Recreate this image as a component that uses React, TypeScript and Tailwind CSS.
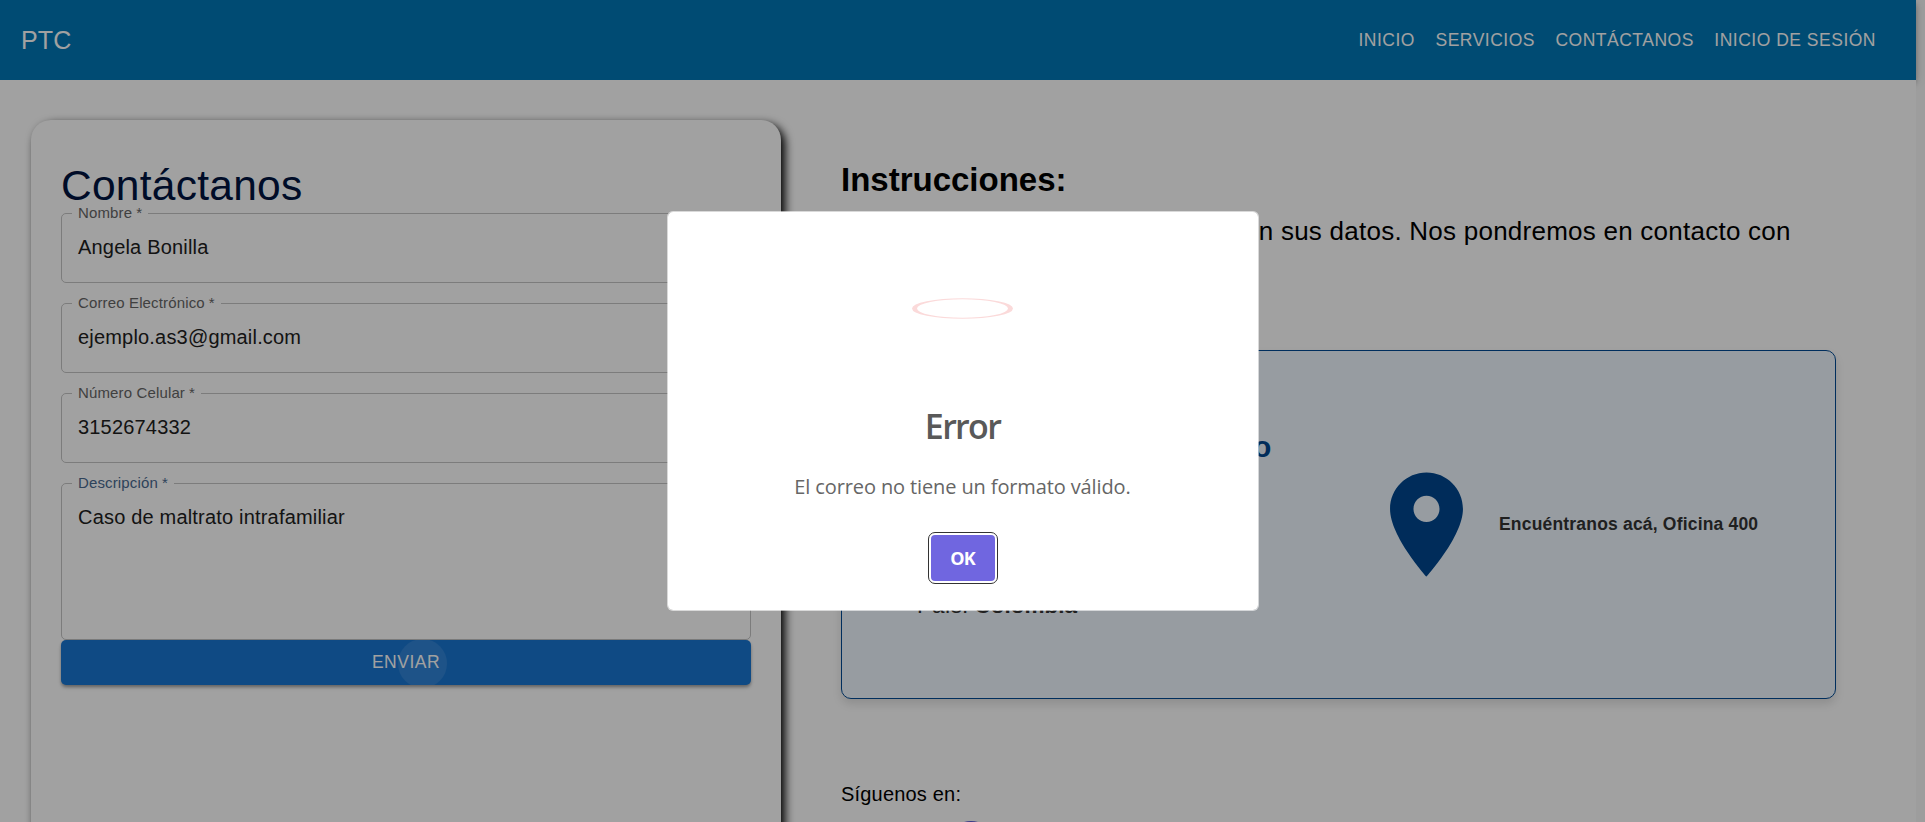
import type { ReactNode } from "react";

const NAV = ["INICIO", "SERVICIOS", "CONTÁCTANOS", "INICIO DE SESIÓN"];

function Field({
  label,
  labelClass = "text-[#666666]",
  heightClass = "h-[76px]",
  children,
}: {
  label: string;
  labelClass?: string;
  heightClass?: string;
  children: ReactNode;
}) {
  return (
    <fieldset
      className={`-mt-[6px] min-w-0 rounded-[5px] border border-[#c4c4c4] px-[10px] ${heightClass}`}
    >
      <legend
        className={`h-[13px] px-[6px] text-[15px] leading-[11px] tracking-[0.00938em] ${labelClass}`}
      >
        {label}
        <span className="pl-[4px]">*</span>
      </legend>
      <div className="px-[6px] pt-[13px] text-[20px] leading-[29px] tracking-[0.00938em] text-[#212121]">
        {children}
      </div>
    </fieldset>
  );
}

function ContactForm() {
  return (
    <section className="ml-[31px] mt-[40px] h-[800px] w-[750px] shrink-0 rounded-[20px] bg-white px-[30px] pt-[40px] shadow-[4px_4px_10px_rgba(0,0,0,1)]">
      <h1 className="h-[53px] text-[42.5px] leading-[52.5px] tracking-[0.006em] text-[#001440]">
        Contáctanos
      </h1>
      <div className="flex flex-col gap-[20px]">
        <Field label="Nombre">Angela Bonilla</Field>
        <Field label="Correo Electrónico">ejemplo.as3@gmail.com</Field>
        <Field label="Número Celular">3152674332</Field>
        <Field label="Descripción" labelClass="text-[#4a6a90]" heightClass="h-[163px]">
          Caso de maltrato intrafamiliar
        </Field>
      </div>
      <button className="relative flex h-[45px] w-full items-center justify-center rounded-[5px] bg-[#1976d2] text-[17.5px] font-medium tracking-[0.02857em] text-white shadow-[0_3px_4px_-1px_rgba(0,0,0,0.25),0_2px_3px_rgba(0,0,0,0.2)]">
        ENVIAR
        <span className="absolute inset-0 overflow-hidden rounded-[5px]">
          <span className="absolute left-[337px] top-[-1px] size-[49px] rounded-full bg-white/10" />
        </span>
      </button>
    </section>
  );
}

function PinIcon() {
  return (
    <svg viewBox="0 0 24 24" className="size-[125px] shrink-0 fill-[#00478f]">
      <path d="M12 2C8.13 2 5 5.13 5 9c0 5.25 7 13 7 13s7-7.75 7-13c0-3.87-3.13-7-7-7zm0 9.5c-1.38 0-2.5-1.12-2.5-2.5s1.12-2.5 2.5-2.5 2.5 1.12 2.5 2.5-1.12 2.5-2.5 2.5z" />
    </svg>
  );
}

function Info() {
  return (
    <section className="ml-[60px] w-[995px] pt-[80px] text-black">
      <h2 className="text-[33px] font-bold leading-[40px]">Instrucciones:</h2>
      <p className="mt-[12px] h-[138px] w-[948px] text-right text-[26px] leading-[39px] tracking-[0.00938em]">
        <span className="whitespace-nowrap">
          Por favor, complete el formulario con sus datos. Nos pondremos en contacto con
        </span>
      </p>
      <div className="flex h-[349px] items-center rounded-[10px] border border-[#004a94] bg-[#f0f8ff] shadow-[0_5px_10px_rgba(0,0,0,0.12)]">
        <div className="ml-[75px] flex h-[196px] w-[447px] flex-col justify-between text-[#333333]">
          <h3 className="pl-px text-[30px] font-bold leading-[40px] text-[#00478f]">
            Información de Contacto
          </h3>
          <p className="text-[22.5px] leading-[34px]">
            País: <b>Colombia</b>
          </p>
        </div>
        <PinIcon />
        <p className="ml-[10px] whitespace-nowrap text-[17.5px] font-bold tracking-[0.01071em] text-[#333333]">
          Encuéntranos acá, Oficina 400
        </p>
      </div>
      <p className="mt-[80px] text-[20px] leading-[30px] tracking-[0.00938em]">Síguenos en:</p>
      <div className="ml-[105px] mt-[12px] h-[50px] w-[50px] rounded-full bg-[#5c5cd6]" />
    </section>
  );
}

function ErrorDialog() {
  return (
    <div className="absolute inset-0 flex items-start justify-center bg-black/37">
      <div className="mt-[211px] flex h-[400px] w-[592px] flex-col items-center rounded-[6px] border border-white/60 bg-white bg-clip-padding font-['Open_Sans',sans-serif]">
        <div className="mt-[46px] size-[101px] scale-y-[0.205] rounded-full border-[5px] border-[#fbdada]" />
        <h2 className="mt-[42px] text-[34px] font-semibold leading-[50px] tracking-[-0.05em] text-[#595959]">
          Error
        </h2>
        <p className="mt-[21px] text-[20px] leading-[30px] tracking-[-0.006em] text-[#666666]">
          El correo no tiene un formato válido.
        </p>
        <button className="mt-[33px] h-[46px] w-[64px] rounded-[4px] bg-[#7066e0] text-[18px] font-bold tracking-[-0.05em] text-white outline outline-offset-[2px] outline-[#333333]">
          OK
        </button>
      </div>
    </div>
  );
}

export default function App() {
  return (
    <div className="relative h-[822px] w-[1925px] overflow-hidden bg-[#f9f9f9] font-['Liberation_Sans',Arial,sans-serif]">
      <div className="w-[1916px]">
        <header className="relative flex h-[80px] items-center justify-between bg-[#0077b6] pl-[21px] pr-[40px] text-white shadow-[0_3px_5px_-1px_rgba(0,0,0,0.2),0_5px_6px_rgba(0,0,0,0.14),0_1px_12px_rgba(0,0,0,0.12)]">
          <span className="pt-[2px] text-[25px] tracking-[0.0075em]">PTC</span>
          <nav className="flex gap-[20.5px] text-[17.5px] font-medium tracking-[0.02857em]">
            {NAV.map((item) => (
              <a key={item}>{item}</a>
            ))}
          </nav>
        </header>
        <main className="relative flex h-[742px] items-start overflow-hidden bg-white">
          <ContactForm />
          <Info />
        </main>
      </div>
      <ErrorDialog />
    </div>
  );
}
